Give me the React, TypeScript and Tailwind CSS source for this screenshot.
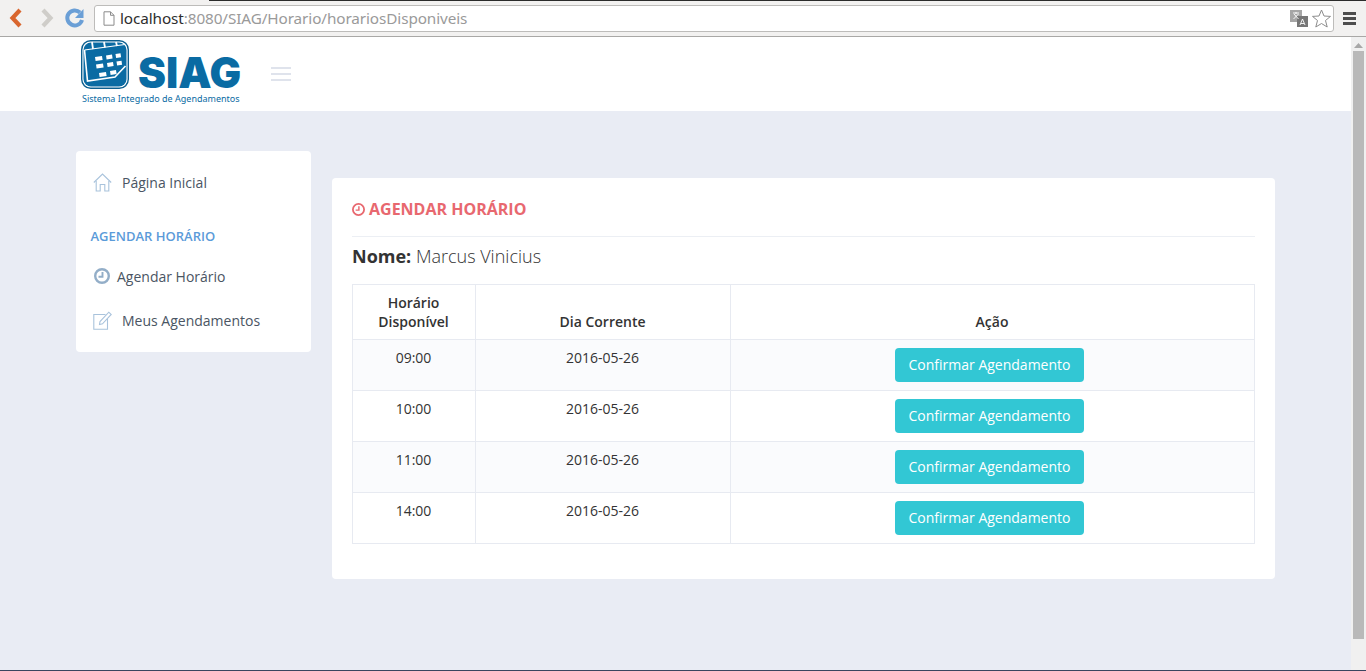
import React from "react";

const rows = ["09:00", "10:00", "11:00", "14:00"];

function Logo() {
  return (
    <svg width="48" height="49" viewBox="0 0 48 49" className="shrink-0">
      <rect x="0.7" y="0.7" width="46.6" height="47.6" rx="9" fill="#fff" stroke="#0b5f8f" strokeWidth="1.400" />
      <rect x="2.5" y="2.5" width="43" height="44" rx="7.500" fill="#0a6ba3" />
      <path d="M3.500 10 L6.500 41 L34 37 L44.500 26" stroke="#fff" strokeWidth="1.600" fill="none" />
      <path d="M3.500 10 L44 4.500" stroke="#fff" strokeWidth="1.200" />
      <path d="M11 2 L12 9 M23 2 L24 7.500 M35 2 L36 6" stroke="#fff" strokeWidth="1.800" />
      <g fill="#fff">
        <path d="M14 17l7-1 .6 4-7 1z" />
        <path d="M25 15.500l6-1 .6 4-6 1z" />
        <path d="M34.500 14l5-.8.6 4-5 .8z" />
        <path d="M15 24.500l7-1 .6 4-7 1z" />
        <path d="M26 23l6-1 .6 4-6 1z" />
        <path d="M35.500 21.500l5-.8.6 4-5 .8z" />
        <path d="M18 33l7-1 .6 4-7 1z" />
        <path d="M29 31l6-1 .6 4-6 1z" />
      </g>
    </svg>
  );
}

function HomeIcon() {
  return (
    <svg width="19" height="19" viewBox="0 0 19 19" fill="none" stroke="#a9c3dc" strokeWidth="1.100">
      <path d="M.8 9.500 L9.500 1 L18.200 9.500" />
      <path d="M3.200 8 V18 H7.200 V11.500 H11.800 V18 H15.800 V8" />
    </svg>
  );
}

function EditIcon() {
  return (
    <svg width="19" height="19" viewBox="0 0 19 19" fill="none" stroke="#a9c3dc" strokeWidth="1.100">
      <path d="M12.500 3.500 H.8 V18.200 H14.500 V8" />
      <path d="M6.500 13.500 L7 10.500 L15.800 1.200 L18.200 3.500 L9.500 12.800Z" />
    </svg>
  );
}

function Clock({ color, size, sw }: { color: string; size: number; sw: number }) {
  return (
    <svg width={size} height={size} viewBox="0 0 16 16" fill="none" stroke={color}>
      <circle cx="8" cy="8" r={8 - sw / 2} strokeWidth={sw} />
      <path d="M8.500 4 V8.800 H4.500" strokeWidth={sw * 0.8} />
    </svg>
  );
}

function BrowserBar() {
  return (
    <div className="relative flex h-[37px] shrink-0 items-start border-b border-[#a9a8a6] bg-[#f2f1f0]">
      <div className="absolute left-[209px] right-0 top-0 h-px bg-[#2b2b2b]" />
      <svg width="90" height="36" viewBox="0 0 90 36" className="shrink-0">
        <path d="M20 10 L12.500 18 L20 26" fill="none" stroke="#d9662e" strokeWidth="4.200" />
        <path d="M43 10 L50.500 18 L43 26" fill="none" stroke="#cfcdc9" strokeWidth="4.200" />
        <path d="M80 12.500 A7.500 7.500 0 1 0 82 20" fill="none" stroke="#6b9fd6" strokeWidth="4" />
        <path d="M83.500 9 V18 H75Z" fill="#6b9fd6" />
      </svg>
      <div className="mt-[5px] ml-[4px] flex h-[27px] w-[1240px] shrink-0 items-center rounded-[3px] border border-[#bdbcba] bg-white pl-[8px] pr-[2px]">
        <svg width="12" height="15" viewBox="0 0 12 15" fill="#fff" stroke="#8b8b8b" className="shrink-0">
          <path d="M1 .8 H7.500 L11 4.300 V14.200 H1Z M7.500 .8 V4.300 H11" />
        </svg>
        <div className="ml-[5px] text-[15.300px] leading-none tracking-[-0.1px] text-[#9a9a9a] font-['Noto_Sans','Open_Sans',sans-serif]">
          <span className="text-[#2e2e2e]">localhost</span>:8080/SIAG/Horario/horariosDisponiveis
        </div>
        <div className="ml-auto flex items-center gap-[2px]">
          <svg width="20" height="18" viewBox="0 0 20 18">
            <rect x="0" y="0" width="12" height="12" fill="#a6a6a6" />
            <rect x="7" y="6" width="11" height="11" fill="#777" />
            <path d="M3 3 H9 M6 2 V4 M3.500 9 L8.500 4 M4 4 L8.500 9" stroke="#fff" strokeWidth="0.900" />
            <path d="M10 15 L12.500 9 L15 15 M11 13.500 H14" stroke="#fff" strokeWidth="0.900" fill="none" />
          </svg>
          <svg width="19" height="19" viewBox="0 0 19 19" fill="#fff" stroke="#8c8c8c" strokeWidth="1">
            <path d="M9.500 1 L12 7 L18.500 7.400 L13.500 11.500 L15.200 18 L9.500 14.500 L3.800 18 L5.500 11.500 L.5 7.400 L7 7Z" />
          </svg>
        </div>
      </div>
      <div className="ml-[9px] mt-[12px] flex w-[13px] flex-col gap-[2px]">
        <div className="h-[3px] bg-[#4d4d4d]" />
        <div className="h-[3px] bg-[#4d4d4d]" />
        <div className="h-[3px] bg-[#4d4d4d]" />
      </div>
    </div>
  );
}

function Scrollbar() {
  return (
    <div className="flex w-[15px] shrink-0 flex-col items-center bg-[#f0f0f0]">
      <svg width="9" height="6" viewBox="0 0 9 6" className="mt-[6px]">
        <path d="M0 5 L4.500 0 L9 5Z" fill="#a8a8a8" />
      </svg>
      <div className="mt-[2px] h-[588px] w-[11px] bg-[#b9b9b9]" />
    </div>
  );
}

function NavRow({ icon, label, gap }: { icon: React.ReactNode; label: string; gap: string }) {
  return (
    <div className={`flex h-[44px] items-center text-[14px] text-[#4a5563] ${gap}`}>
      {icon}
      <span>{label}</span>
    </div>
  );
}

export default function App() {
  return (
    <div className="relative flex h-[671px] w-[1366px] flex-col overflow-hidden bg-[#e9ecf4] font-['Open_Sans',sans-serif]">
      <BrowserBar />
      <div className="flex min-h-0 flex-1">
        <div className="min-w-0 flex-1">
          <header className="flex h-[74px] items-start bg-white pl-[81px]">
            <div className="mt-[3px] flex w-[162px] flex-col">
              <div className="flex h-[49px] items-start">
                <Logo />
                <span className="ml-[9px] mt-[16px] text-[42px] leading-[34px] font-black text-[#0a6ba3] font-['Inter',sans-serif]">
                  SIAG
                </span>
              </div>
              <span className="mt-[4px] ml-px whitespace-nowrap text-[9px] leading-[11px] text-[#0a6ba3] font-['Noto_Sans',sans-serif]">
                Sistema Integrado de Agendamentos
              </span>
            </div>
            <div className="ml-[28px] mt-[30px] flex w-[20px] flex-col gap-[4px]">
              <div className="h-[2px] bg-[#dfe3ec]" />
              <div className="h-[2px] bg-[#dfe3ec]" />
              <div className="h-[2px] bg-[#dfe3ec]" />
            </div>
          </header>
          <main className="flex items-start gap-[21px] pl-[76px] pt-[40px]">
            <aside className="h-[201px] w-[235px] shrink-0 rounded-[4px] bg-white pt-[9px]">
              <NavRow icon={<HomeIcon />} label="Página Inicial" gap="gap-[10px] pl-[17px]" />
              <div className="mt-[23px] mb-[9px] pl-[14.500px] text-[13px] leading-[18px] font-semibold text-[#5b9bd9]">
                AGENDAR HORÁRIO
              </div>
              <NavRow icon={<Clock color="#93aec8" size={16} sw={2.400} />} label="Agendar Horário" gap="gap-[7px] pl-[18px]" />
              <NavRow icon={<EditIcon />} label="Meus Agendamentos" gap="gap-[10px] pl-[17px]" />
            </aside>
            <section className="mt-[27px] h-[401px] w-[943px] shrink-0 rounded-[4px] bg-white px-[20px] pt-[20px]">
              <div className="flex h-[38px] items-start">
                <h2 className="flex items-center gap-[4px] text-[16px] leading-[22px] font-bold text-[#e8686f]">
                  <Clock color="#e8686f" size={13} sw={2.200} />
                  AGENDAR HORÁRIO
                </h2>
              </div>
              <div className="h-px bg-[#eceff4]" />
              <p className="mt-[6px] h-[41px] text-[18px] leading-[26px] font-light text-[#333]">
                <b className="font-bold">Nome:</b> Marcus Vinicius
              </p>
              <table className="w-[902px] table-fixed border-collapse text-[14px] text-[#333]">
                <colgroup>
                  <col className="w-[123px]" />
                  <col className="w-[255px]" />
                  <col className="w-[524px]" />
                </colgroup>
                <thead>
                  <tr className="h-[55px]">
                    {["Horário Disponível", "Dia Corrente", "Ação"].map((h) => (
                      <th key={h} className="border border-[#e7eaf1] pl-[8px] pr-[9px] pb-[8px] pt-[8px] align-bottom text-center text-[14px] leading-[19px] font-semibold">
                        {h}
                      </th>
                    ))}
                  </tr>
                </thead>
                <tbody>
                  {rows.map((t, i) => (
                    <tr key={t} className={i % 2 === 0 ? "h-[51px] bg-[#fafbfd]" : "h-[51px] bg-white"}>
                      <td className="border border-[#e7eaf1] py-[8px] pl-[8px] pr-[9px] align-top text-center leading-[20px]">{t}</td>
                      <td className="border border-[#e7eaf1] py-[8px] pl-[8px] pr-[9px] align-top text-center leading-[20px]">2016-05-26</td>
                      <td className="border border-[#e7eaf1] p-[8px] align-top text-center leading-[20px]">
                        <button className="mr-[6px] inline-block h-[34px] w-[189px] whitespace-nowrap rounded-[4px] bg-[#32c7d4] text-[14px] leading-[20px] text-white">
                          Confirmar Agendamento
                        </button>
                      </td>
                    </tr>
                  ))}
                </tbody>
              </table>
            </section>
          </main>
        </div>
        <Scrollbar />
      </div>
      <div className="absolute bottom-0 left-0 right-0 h-px bg-[#39455f]" />
    </div>
  );
}
